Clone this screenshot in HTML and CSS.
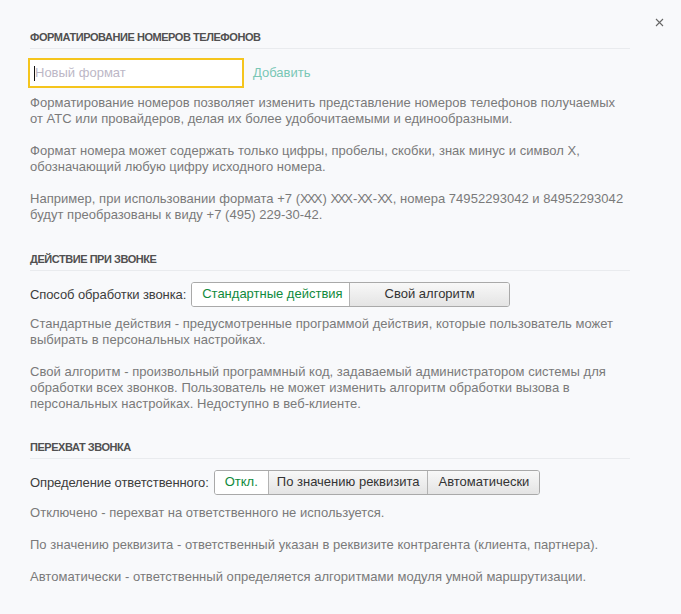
FILE: index.html
```html
<!DOCTYPE html>
<html lang="ru">
<head>
<meta charset="utf-8">
<title>Настройки</title>
<link rel="stylesheet" href="styles.css">
</head>
<body>
<div class="dialog">
  <button class="close" aria-label="Закрыть">
    <svg width="9" height="9" viewBox="0 0 9 9"><path d="M1 1L8 8M8 1L1 8" stroke="#666" stroke-width="1.1" fill="none"/></svg>
  </button>

  <section class="section first">
    <h2 class="section-title">Форматирование номеров телефонов</h2>
    <div class="add-row">
      <div class="input"><span class="caret"></span><span class="placeholder">Новый формат</span></div>
      <a class="add-link">Добавить</a>
    </div>
    <p class="desc tight">Форматирование номеров позволяет изменить представление номеров телефонов получаемых<br>от АТС или провайдеров, делая их более удобочитаемыми и единообразными.</p>
    <p class="desc">Формат номера может содержать только цифры, пробелы, скобки, знак минус и символ Х,<br>обозначающий любую цифру исходного номера.</p>
    <p class="desc">Например, при использовании формата +7 (<span class="mask">XXX</span>) <span class="mask">XXX</span>-<span class="mask">XX</span>-<span class="mask">XX</span>, номера 74952293042 и 84952293042<br>будут преобразованы к виду +7 (495) 229-30-42.</p>
  </section>

  <section class="section">
    <h2 class="section-title">Действие при звонке</h2>
    <div class="choice-row">
      <span class="label">Способ обработки звонка:</span>
      <div class="segmented">
        <span class="seg selected seg-std">Стандартные действия</span>
        <span class="seg seg-own">Свой алгоритм</span>
      </div>
    </div>
    <p class="desc tight">Стандартные действия - предусмотренные программой действия, которые пользователь может<br>выбирать в персональных настройках.</p>
    <p class="desc">Свой алгоритм - произвольный программный код, задаваемый администратором системы для<br>обработки всех звонков. Пользователь не может изменить алгоритм обработки вызова в<br>персональных настройках. Недоступно в веб-клиенте.</p>
  </section>

  <section class="section">
    <h2 class="section-title">Перехват звонка</h2>
    <div class="choice-row">
      <span class="label">Определение ответственного:</span>
      <div class="segmented">
        <span class="seg selected">Откл.</span>
        <span class="seg seg-mid">По значению реквизита</span>
        <span class="seg">Автоматически</span>
      </div>
    </div>
    <p class="desc tight">Отключено - перехват на ответственного не используется.</p>
    <p class="desc">По значению реквизита - ответственный указан в реквизите контрагента (клиента, партнера).</p>
    <p class="desc">Автоматически - ответственный определяется алгоритмами модуля умной маршрутизации.</p>
  </section>
</div>
</body>
</html>
```

FILE: styles.css
```css
html, body {
  margin: 0;
  padding: 0;
  background: #f8f9fb;
}

body {
  font-family: "Liberation Sans", Arial, sans-serif;
  font-size: 13px;
  line-height: 16px;
  color: #444;
}

.dialog {
  position: relative;
  width: 600px;
  padding: 0 51px 0 30px;
}

.close {
  position: absolute;
  top: 17px;
  left: 654px;
  width: 11px;
  height: 11px;
  padding: 0;
  border: 0;
  background: transparent;
  display: flex;
  align-items: center;
  justify-content: center;
}

.section {
  padding-top: 29px;
}

.section.first {
  padding-top: 30px;
}

.section:last-child {
  padding-top: 28px;
}

.section-title {
  margin: 0;
  font-size: 11px;
  line-height: 14px;
  font-weight: bold;
  letter-spacing: -0.45px;
  text-transform: uppercase;
  color: #505050;
  padding-bottom: 4px;
  border-bottom: 1px solid #e9ebee;
}

.add-row {
  display: flex;
  align-items: center;
  margin-top: 9px;
  margin-left: -2px;
}

.input {
  box-sizing: border-box;
  width: 216px;
  height: 30px;
  border: 2px solid #f5c51d;
  background: #fff;
  display: flex;
  align-items: center;
  padding-left: 4px;
}

.caret {
  width: 1px;
  height: 15px;
  background: #111;
}

.placeholder {
  color: #bcb7c6;
}

.add-link {
  margin-left: 9px;
  color: #79c7b5;
}

.desc {
  margin: 16px -20px 0 0;
  color: #7a7a7a;
  letter-spacing: 0.03px;
}

.mask {
  letter-spacing: -1.8px;
  margin-right: 1.8px;
}

.section.first .desc.tight {
  margin-top: 7px;
}

.desc.tight {
  margin-top: 9px;
}

.section:last-child .desc.tight {
  margin-top: 10px;
}

.choice-row {
  display: flex;
  align-items: center;
  margin-top: 11px;
}

.label {
  color: #3d3d3d;
  margin-right: 5px;
  letter-spacing: -0.1px;
}

.segmented {
  display: flex;
  border: 1px solid #a9a9a9;
  border-radius: 3px;
  overflow: hidden;
}

.seg {
  box-sizing: border-box;
  height: 23px;
  line-height: 22px;
  padding: 0 10px;
  text-align: center;
  white-space: nowrap;
  color: #333;
  background: linear-gradient(#f8f8f8, #e4e4e4);
  border-left: 1px solid #b3b3b3;
}

.seg:first-child {
  border-left: 0;
}

.seg.selected {
  background: #fff;
  color: #108a3c;
}

.seg-std {
  width: 157px;
}

.seg-own {
  width: 160px;
}

.seg-mid {
  padding: 0 8px;
}
```
